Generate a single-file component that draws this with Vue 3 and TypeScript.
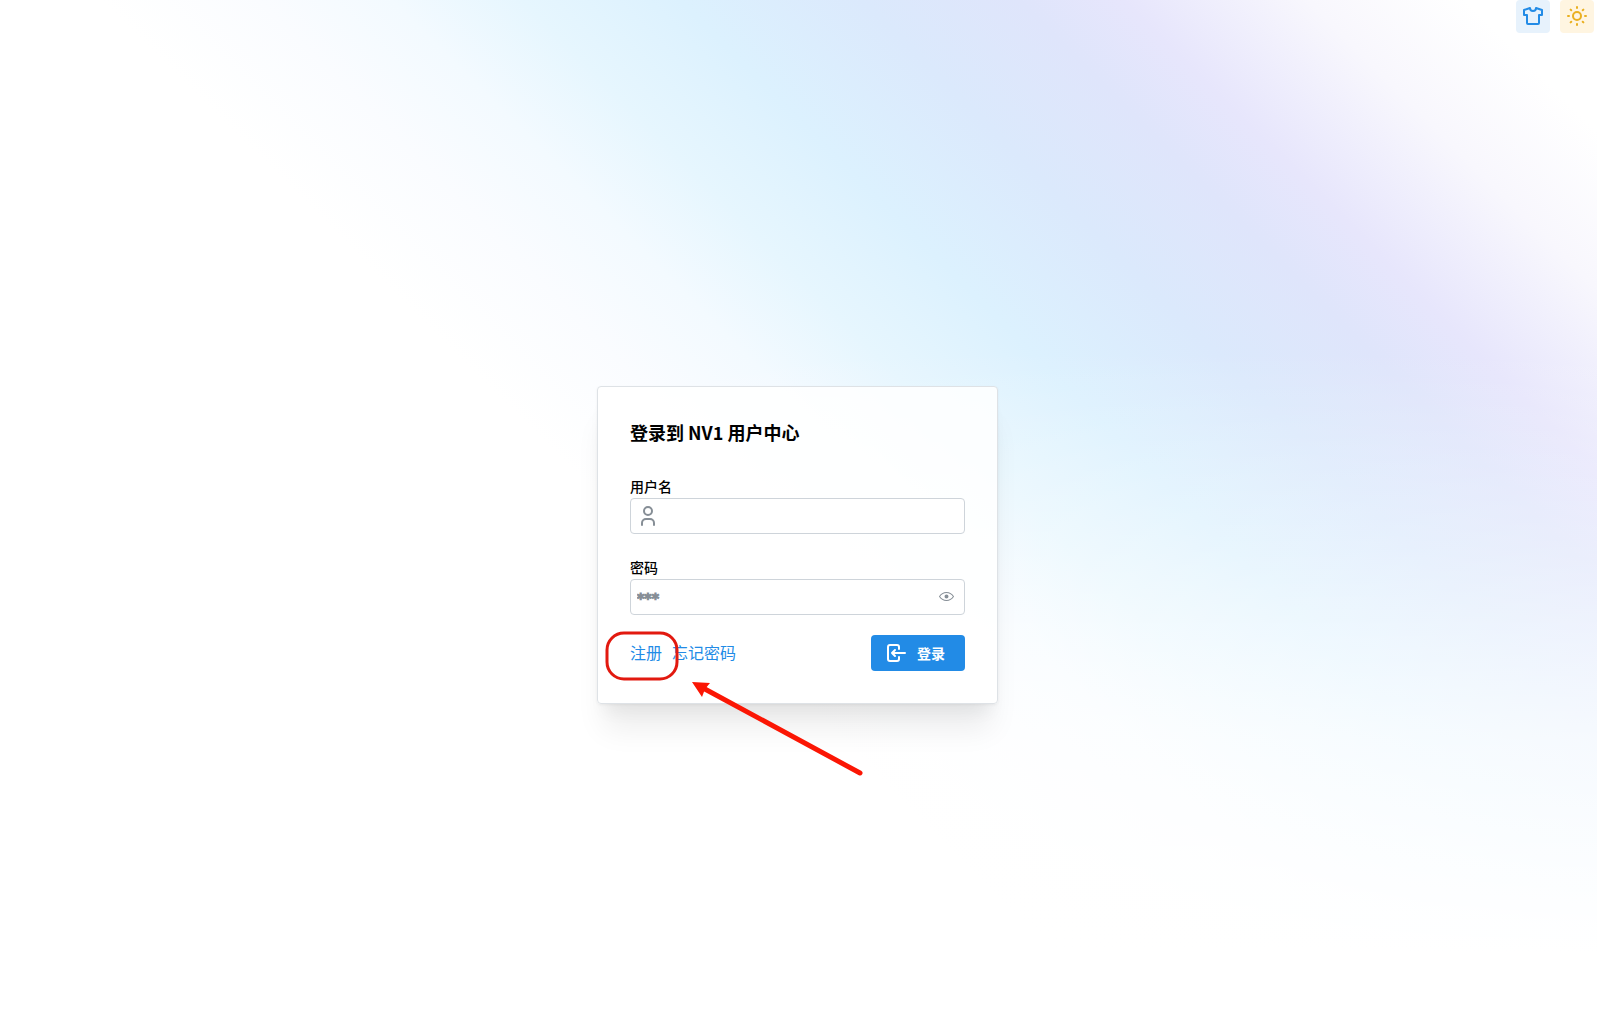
<script setup lang="ts">
import { ref } from 'vue'

const username = ref('')
const password = ref('')
const passwordVisible = ref(false)
</script>

<template>
  <div class="page">
    <header class="toolbar">
      <button class="tool tool-theme" type="button" aria-label="主题">
        <svg class="icon" viewBox="0 0 24 24" aria-hidden="true">
          <path d="M15 4l6 2v5h-3v8a1 1 0 0 1-1 1h-10a1 1 0 0 1-1-1v-8h-3v-5l6-2a3 3 0 0 0 6 0" />
        </svg>
      </button>
      <button class="tool tool-light" type="button" aria-label="明暗">
        <svg class="icon" viewBox="0 0 24 24" aria-hidden="true">
          <circle cx="12" cy="12" r="4" />
          <path d="M3 12h1m8-9v1m8 8h1m-9 8v1M5.600 5.600l.7.7m12.100-.7l-.7.7m0 11.400l.7.7m-12.100-.7l-.7.7" />
        </svg>
      </button>
    </header>

    <main class="content">
      <form class="card" @submit.prevent>
        <h1 class="title">登录到 NV1 用户中心</h1>

        <div class="field">
          <label for="username">用户名</label>
          <div class="control">
            <svg class="icon user-icon" viewBox="0 0 24 24" aria-hidden="true">
              <circle cx="12" cy="7" r="4" />
              <path d="M6 21v-2a4 4 0 0 1 4-4h4a4 4 0 0 1 4 4v2" />
            </svg>
            <input id="username" v-model="username" type="text" autocomplete="username" />
          </div>
        </div>

        <div class="field">
          <label for="password">密码</label>
          <div class="control">
            <input
              id="password"
              v-model="password"
              class="secret"
              :type="passwordVisible ? 'text' : 'password'"
              placeholder="***"
              autocomplete="current-password"
            />
            <button class="reveal" type="button" aria-label="显示密码" @click="passwordVisible = !passwordVisible">
              <svg class="eye" viewBox="0 0 15 15" aria-hidden="true">
                <path
                  fill-rule="evenodd"
                  d="M7.5 11C4.800 11 2.530 9.620 1.100 7.500C2.530 5.380 4.800 4 7.500 4C10.200 4 12.470 5.380 13.900 7.500C12.470 9.620 10.200 11 7.500 11ZM7.500 3C4.310 3 1.660 4.710.080 7.230C-.030 7.400-.030 7.600.080 7.770C1.660 10.290 4.310 12 7.500 12C10.690 12 13.340 10.290 14.920 7.770C15.030 7.600 15.030 7.400 14.920 7.230C13.340 4.710 10.690 3 7.500 3ZM7.500 9.500A2 2 0 1 0 7.500 5.500A2 2 0 0 0 7.500 9.500Z"
                />
              </svg>
            </button>
          </div>
        </div>

        <div class="actions">
          <nav class="links">
            <a href="#register">注册</a>
            <a href="#forgot">忘记密码</a>
          </nav>
          <button class="submit" type="submit">
            <svg class="icon" viewBox="0 0 24 24" aria-hidden="true">
              <path d="M14 8v-2a2 2 0 0 0-2-2h-7a2 2 0 0 0-2 2v12a2 2 0 0 0 2 2h7a2 2 0 0 0 2-2v-2" />
              <path d="M20 12h-13l3-3m0 6l-3-3" />
            </svg>
            <span>登录</span>
          </button>
        </div>

        <svg class="annotation" viewBox="0 0 400 400" aria-hidden="true">
          <rect x="9" y="246" width="70" height="46" rx="17" fill="none" stroke="#e2190f" stroke-width="3" />
          <path d="M105 301L262 386" fill="none" stroke="#fb1604" stroke-width="5" stroke-linecap="round" />
          <path d="M94 295L112 296L107 302L104 310Z" fill="#fb1604" />
        </svg>
      </form>
    </main>
  </div>
</template>

<style>
body {
  margin: 0;
}
</style>

<style scoped>
.page {
  position: relative;
  box-sizing: border-box;
  min-height: 100vh;
  display: flex;
  flex-direction: column;
  font-family: "Noto Sans CJK SC", sans-serif;
  color: #000;
  background:
    linear-gradient(to bottom, rgba(255, 255, 255, 0) 34%, rgba(255, 255, 255, 0.35) 54%, rgba(255, 255, 255, 0.75) 72%, #fff 93%),
    linear-gradient(45deg, #fff 43%, #fafcff 49%, #f3faff 54%, #e6f6fe 59%, #dcf1fe 65%, #dbe9fc 72%, #dfe5fb 78%, #e7e6fc 82%, #f8f7fd 89%, #fff 95%);
}

.icon {
  width: 24px;
  height: 24px;
  flex: none;
  fill: none;
  stroke: currentColor;
  stroke-width: 2;
  stroke-linecap: round;
  stroke-linejoin: round;
}

.toolbar {
  height: 33px;
  padding-right: 3px;
  display: flex;
  justify-content: flex-end;
  gap: 10px;
}

.tool {
  width: 34px;
  padding: 0 0 1px;
  border: 0;
  border-radius: 4px;
  display: flex;
  align-items: center;
  justify-content: center;
}

.tool-theme {
  background: #e7f2fc;
  color: #228be6;
}

.tool-light {
  background: #fff5e1;
  color: #eab020;
}

.content {
  flex: 1;
  padding: 31px 2px 0 0;
  display: flex;
  align-items: center;
  justify-content: center;
}

.card {
  position: relative;
  box-sizing: border-box;
  width: 401px;
  padding: 32px;
  border: 1px solid #dee2e6;
  border-radius: 4px;
  background: rgba(255, 255, 255, 0.85);
  box-shadow: 0 1px 3px rgba(0, 0, 0, 0.05), 0 32px 28px -7px rgba(0, 0, 0, 0.07), 0 14px 16px -7px rgba(0, 0, 0, 0.05);
}

.title {
  margin: 0 0 31px;
  font-size: 18px;
  line-height: 26px;
  font-weight: 700;
}

.field {
  margin-bottom: 23px;
}

.field label {
  display: block;
  margin-bottom: 2px;
  font-size: 14px;
  line-height: 20px;
  font-weight: 500;
}

.control {
  box-sizing: border-box;
  height: 36px;
  padding: 0 5px;
  display: flex;
  align-items: center;
  border: 1px solid #ced4da;
  border-radius: 4px;
  background: #fff;
}

.control input {
  box-sizing: border-box;
  flex: 1;
  min-width: 0;
  height: 34px;
  padding: 0 1px;
  border: 0;
  outline: 0;
  background: none;
  font-family: inherit;
  font-size: 14px;
}

.control .secret {
  padding-top: 2px;
  font-family: "DejaVu Sans", sans-serif;
}

.control .secret::placeholder {
  color: #868e96;
  font-weight: 700;
  -webkit-text-stroke: 1px #868e96;
  opacity: 1;
}

.user-icon {
  color: #868e96;
}

.reveal {
  width: 25px;
  height: 25px;
  padding: 0;
  border: 0;
  background: none;
  color: #868e96;
  display: flex;
  align-items: center;
  justify-content: center;
}

.eye {
  width: 15px;
  height: 15px;
  fill: currentColor;
}

.actions {
  margin-top: -3px;
  display: flex;
  align-items: center;
  justify-content: space-between;
}

.links {
  padding-bottom: 2px;
  display: flex;
  gap: 10px;
  font-size: 16px;
  line-height: 24px;
}

.links a {
  color: #228be6;
  text-decoration: none;
}

.submit {
  height: 36px;
  padding: 0 20px 0 14px;
  border: 0;
  border-radius: 4px;
  display: flex;
  align-items: center;
  gap: 8px;
  background: #228be6;
  color: #fff;
  font-family: inherit;
  font-size: 14px;
  line-height: 20px;
  font-weight: 700;
}

.annotation {
  position: absolute;
  top: 0;
  left: 0;
  width: 400px;
  height: 400px;
  pointer-events: none;
}
</style>
